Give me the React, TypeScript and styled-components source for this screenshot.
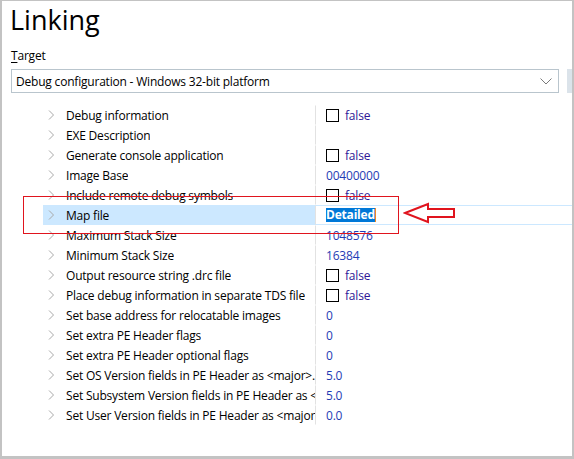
import React from "react";
import styled, { createGlobalStyle } from "styled-components";

const GlobalStyle = createGlobalStyle`
  html, body {
    margin: 0;
    padding: 0;
    background: #ffffff;
  }
  body {
    font-family: "Open Sans", "Noto Sans", sans-serif;
    font-size: 12px;
    letter-spacing: -0.2px;
    color: #000;
  }
`;

type Row = {
  name: string;
  value: string;
  kind: "bool" | "num" | "text";
  selected?: boolean;
};

const rows: Row[] = [
  { name: "Debug information", value: "false", kind: "bool" },
  { name: "EXE Description", value: "", kind: "text" },
  { name: "Generate console application", value: "false", kind: "bool" },
  { name: "Image Base", value: "00400000", kind: "num" },
  { name: "Include remote debug symbols", value: "false", kind: "bool" },
  { name: "Map file", value: "Detailed", kind: "text", selected: true },
  { name: "Maximum Stack Size", value: "1048576", kind: "num" },
  { name: "Minimum Stack Size", value: "16384", kind: "num" },
  { name: "Output resource string .drc file", value: "false", kind: "bool" },
  { name: "Place debug information in separate TDS file", value: "false", kind: "bool" },
  { name: "Set base address for relocatable images", value: "0", kind: "num" },
  { name: "Set extra PE Header flags", value: "0", kind: "num" },
  { name: "Set extra PE Header optional flags", value: "0", kind: "num" },
  { name: "Set OS Version fields in PE Header as <major>.<minor>", value: "5.0", kind: "num" },
  { name: "Set Subsystem Version fields in PE Header as <major>.<minor>", value: "5.0", kind: "num" },
  { name: "Set User Version fields in PE Header as <major>.<minor>", value: "0.0", kind: "num" },
];

const App: React.FC = () => {
  return (
    <>
      <GlobalStyle />
      <Window>
        <Title>Linking</Title>
        <Label>
          <u>T</u>arget
        </Label>
        <SelectRow>
          <Select>
            <span>Debug configuration - Windows 32-bit platform</span>
            <svg width="12" height="7" viewBox="0 0 12 7">
              <path d="M0.5 0.5 L6 6 L11.5 0.5" fill="none" stroke="#7a7a7a" strokeWidth="1" />
            </svg>
          </Select>
          <Thumb />
        </SelectRow>
        <Tree>
          {rows.map((r) => (
            <TreeRow key={r.name}>
              <NameCell selected={r.selected}>
                <svg width="7" height="10" viewBox="0 0 7 10">
                  <path d="M1 0.5 L5.5 5 L1 9.5" fill="none" stroke="#a8a8a8" strokeWidth="1" />
                </svg>
                <NameText>{r.name}</NameText>
              </NameCell>
              <ValueCell selected={r.selected}>
                {r.kind === "bool" && <Check />}
                {r.selected ? (
                  <Highlight>{r.value}</Highlight>
                ) : (
                  <Value kind={r.kind}>{r.value}</Value>
                )}
              </ValueCell>
            </TreeRow>
          ))}
        </Tree>

        <Callout />
        <Arrow width="54" height="22" viewBox="0 0 54 22">
          <polygon
            points="2,11 25,2 25,7 51,7 51,15 25,15 25,20"
            fill="none"
            stroke="#e0141e"
            strokeWidth="2"
            strokeLinejoin="miter"
          />
        </Arrow>
      </Window>
    </>
  );
};

const Window = styled.div`
  position: relative;
  width: 574px;
  height: 459px;
  box-sizing: border-box;
  border-style: solid;
  border-color: #c3c3c3;
  border-width: 1px 2px 3px 2px;
  background: #fff;
  overflow: hidden;
`;

const Title = styled.div`
  padding-left: 8px;
  font-size: 27px;
  letter-spacing: 0;
  line-height: 37px;
  height: 37px;
  color: #000;
`;

const Label = styled.div`
  margin-top: 10px;
  padding-left: 9px;
  font-size: 12px;
  line-height: 16px;
  height: 16px;
  u {
    text-decoration-thickness: 1px;
    text-underline-offset: 2px;
  }
`;

const SelectRow = styled.div`
  margin-top: 5px;
  padding-left: 9px;
  display: flex;
  gap: 8px;
`;

const Select = styled.div`
  width: 548px;
  height: 24px;
  box-sizing: border-box;
  border: 1px solid #b9c5cd;
  display: flex;
  align-items: center;
  justify-content: space-between;
  padding: 0 6px 0 4px;
  font-size: 12px;
  white-space: nowrap;
`;

const Thumb = styled.div`
  width: 5px;
  height: 24px;
  background: #dbe3ea;
`;

const Tree = styled.div`
  margin-top: 12px;
  padding-left: 41px;
  display: flex;
  flex-direction: column;
`;

const TreeRow = styled.div`
  display: grid;
  grid-template-columns: 272px 1fr;
  height: 20px;
`;

const NameCell = styled.div<{ selected?: boolean }>`
  display: flex;
  align-items: center;
  gap: 11px;
  padding-left: 5px;
  background: ${(p) => (p.selected ? "#cce8ff" : "transparent")};
  white-space: nowrap;
  overflow: hidden;
  svg {
    flex: none;
  }
`;

const NameText = styled.span`
  overflow: hidden;
  min-width: 0;
`;

const ValueCell = styled.div<{ selected?: boolean }>`
  display: flex;
  align-items: center;
  gap: 6px;
  box-sizing: border-box;
  padding-left: 10px;
  border-left: 1px solid #e2e2e2;
  border-top: 1px solid ${(p) => (p.selected ? "#cce8ff" : "transparent")};
  border-bottom: 1px solid ${(p) => (p.selected ? "#cce8ff" : "transparent")};
  white-space: nowrap;
`;

const Check = styled.div`
  width: 13px;
  height: 13px;
  box-sizing: border-box;
  border: 1px solid #000;
  flex: none;
`;

const Value = styled.span<{ kind: Row["kind"] }>`
  color: ${(p) => (p.kind === "bool" ? "#2e1896" : "#1f3cb4")};
`;

const Highlight = styled.span`
  background: #0078d7;
  color: #fff;
  font-weight: 700;
  line-height: 14px;
  border-right: 1px solid #f08a24;
`;

const Callout = styled.div`
  position: absolute;
  left: 21px;
  top: 195px;
  width: 376px;
  height: 38px;
  box-sizing: border-box;
  border: 1px solid #e0141e;
`;

const Arrow = styled.svg`
  position: absolute;
  left: 401px;
  top: 201px;
`;

export default App;
